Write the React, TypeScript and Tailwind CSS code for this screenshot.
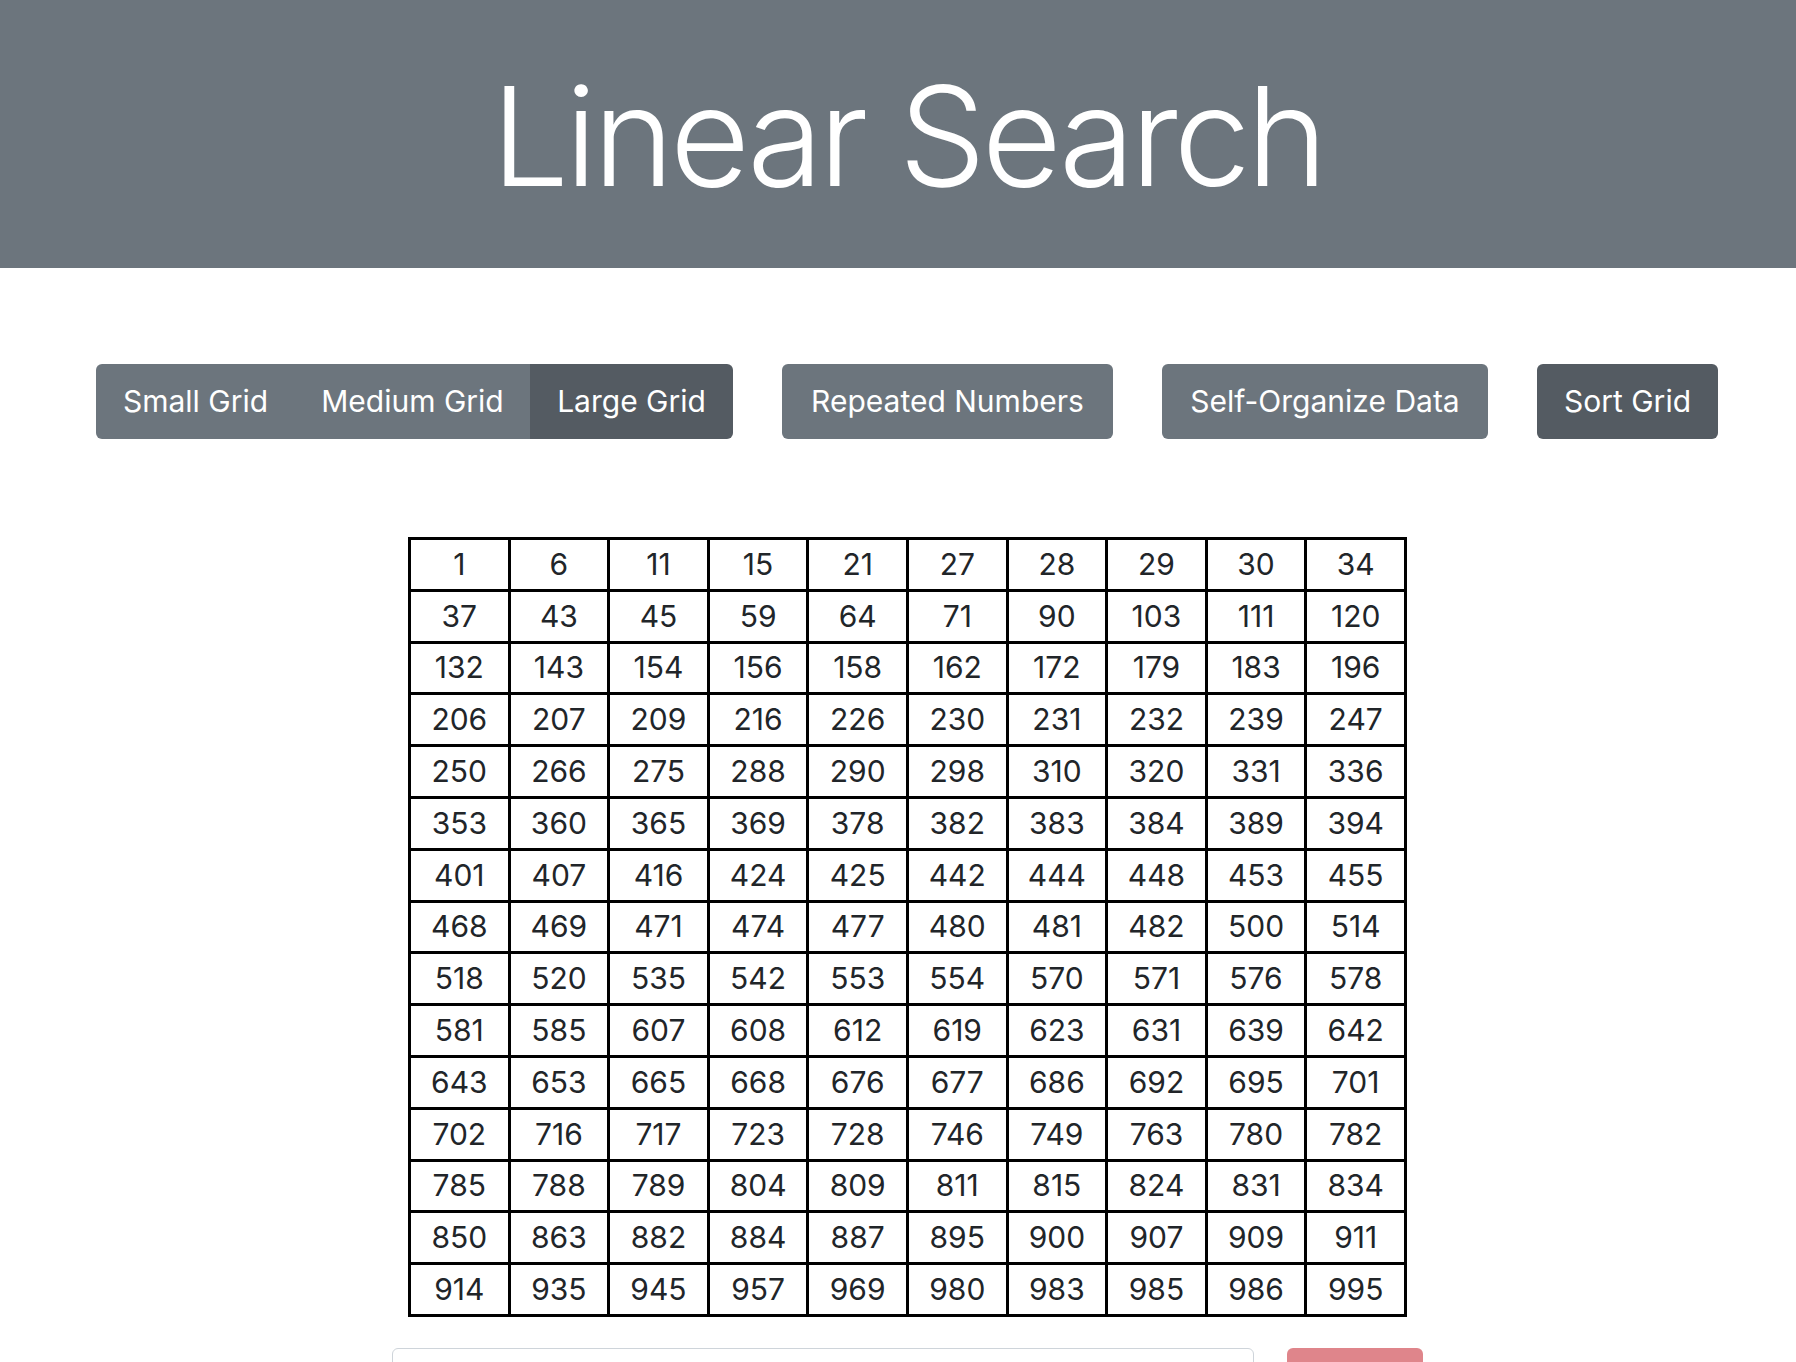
const rows: number[][] = [
  [1, 6, 11, 15, 21, 27, 28, 29, 30, 34],
  [37, 43, 45, 59, 64, 71, 90, 103, 111, 120],
  [132, 143, 154, 156, 158, 162, 172, 179, 183, 196],
  [206, 207, 209, 216, 226, 230, 231, 232, 239, 247],
  [250, 266, 275, 288, 290, 298, 310, 320, 331, 336],
  [353, 360, 365, 369, 378, 382, 383, 384, 389, 394],
  [401, 407, 416, 424, 425, 442, 444, 448, 453, 455],
  [468, 469, 471, 474, 477, 480, 481, 482, 500, 514],
  [518, 520, 535, 542, 553, 554, 570, 571, 576, 578],
  [581, 585, 607, 608, 612, 619, 623, 631, 639, 642],
  [643, 653, 665, 668, 676, 677, 686, 692, 695, 701],
  [702, 716, 717, 723, 728, 746, 749, 763, 780, 782],
  [785, 788, 789, 804, 809, 811, 815, 824, 831, 834],
  [850, 863, 882, 884, 887, 895, 900, 907, 909, 911],
  [914, 935, 945, 957, 969, 980, 983, 985, 986, 995],
];

const App = () => {
  return (
    <div className="min-h-screen bg-white text-[#212529] font-['Inter',sans-serif]">
      {/* Header */}
      <header className="h-[268px] bg-[#6c757d] flex items-center justify-center pl-[19px]">
        <h1 className="text-[138px] font-light leading-none text-white tracking-[-4.2px] pt-[4px]">Linear Search</h1>
      </header>

      {/* Controls */}
      <div className="mt-[96px] flex items-center gap-[49px] pl-[96px]">
        <div className="flex rounded-[6px] overflow-hidden text-[30px] text-white">
          <button className="bg-[#6c757d] w-[199px] h-[75px]">Small Grid</button>
          <button className="bg-[#6c757d] w-[235px] h-[75px]">Medium Grid</button>
          <button className="bg-[#545b62] w-[203px] h-[75px]">Large Grid</button>
        </div>
        <button className="bg-[#6c757d] rounded-[6px] w-[331px] h-[75px] text-[30px] text-white">Repeated Numbers</button>
        <button className="bg-[#6c757d] rounded-[6px] w-[326px] h-[75px] text-[30px] text-white">Self-Organize Data</button>
        <button className="bg-[#545b62] rounded-[6px] w-[181px] h-[75px] text-[30px] text-white">Sort Grid</button>
      </div>

      {/* Grid */}
      <div className="mt-[98px] flex justify-center pl-[19px]">
        <table className="w-[999px] table-fixed border-collapse text-[30px]">
          <tbody>
            {rows.map((row, i) => (
              <tr key={i}>
                {row.map((n) => (
                  <td key={n} className="border-[3px] border-black h-[51.8px] p-0 text-center align-middle">
                    {n}
                  </td>
                ))}
              </tr>
            ))}
          </tbody>
        </table>
      </div>

      {/* Search */}
      <div className="mt-[31px] flex justify-center gap-[33px] pl-[19px] pb-10">
        <input
          type="text"
          className="w-[862px] h-[72px] rounded-[6px] border-[1.5px] border-[#ced4da] px-6 text-[30px] outline-none"
        />
        <button className="w-[136px] h-[72px] rounded-[6px] bg-[#df858b] text-white text-[30px]">Search</button>
      </div>
    </div>
  );
};

export default App;
